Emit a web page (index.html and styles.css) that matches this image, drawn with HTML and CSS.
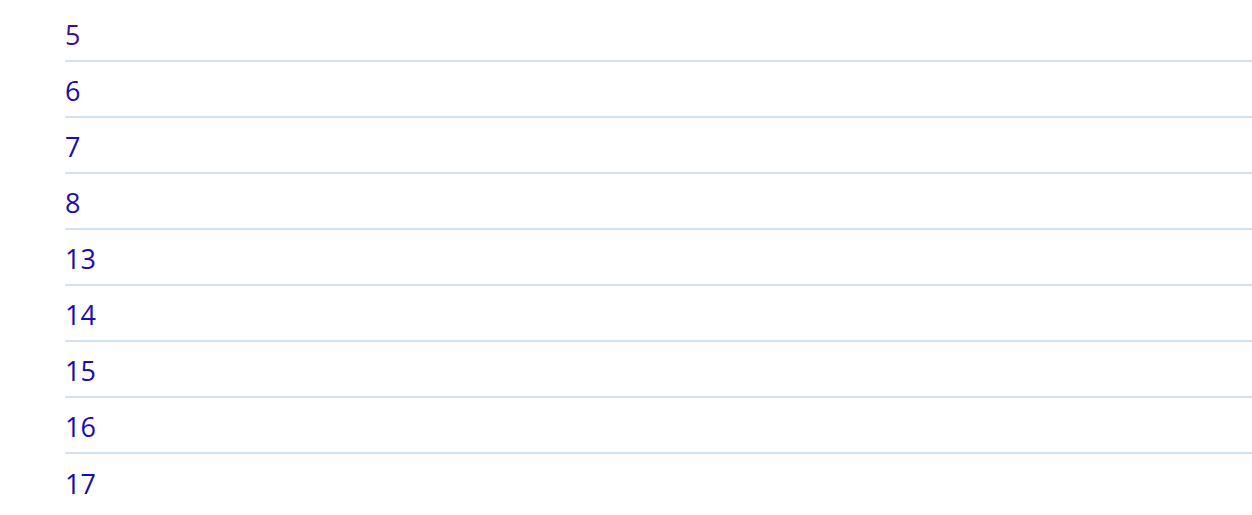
FILE: index.html
```html
<!DOCTYPE html>
<html lang="en">
<head>
  <meta charset="UTF-8">
  <title>Pages</title>
  <link rel="stylesheet" href="styles.css">
</head>
<body>
  <ul class="page-list">
    <li><a href="#" class="visited">5</a></li>
    <li><a href="#">6</a></li>
    <li><a href="#">7</a></li>
    <li><a href="#">8</a></li>
    <li><a href="#">13</a></li>
    <li><a href="#">14</a></li>
    <li><a href="#">15</a></li>
    <li><a href="#">16</a></li>
    <li><a href="#">17</a></li>
  </ul>
</body>
</html>
```

FILE: styles.css
```css
* {
  box-sizing: border-box;
}

body {
  margin: 0;
  background: #fff;
  font-family: 'Open Sans', 'Segoe UI', sans-serif;
}

.page-list {
  list-style: none;
  margin: 0;
  padding: 6px 0 0 65px;
}

.page-list li {
  height: 56px;
  border-bottom: 2px solid #d3e0f7;
  display: flex;
  align-items: center;
  padding-top: 3px;
}

.page-list li:last-child {
  border-bottom: none;
}

.page-list a {
  color: #1a0dab;
  text-decoration: none;
  font-size: 27px;
  line-height: 1;
}

.page-list a.visited {
  color: #3f0b9f;
}
```
